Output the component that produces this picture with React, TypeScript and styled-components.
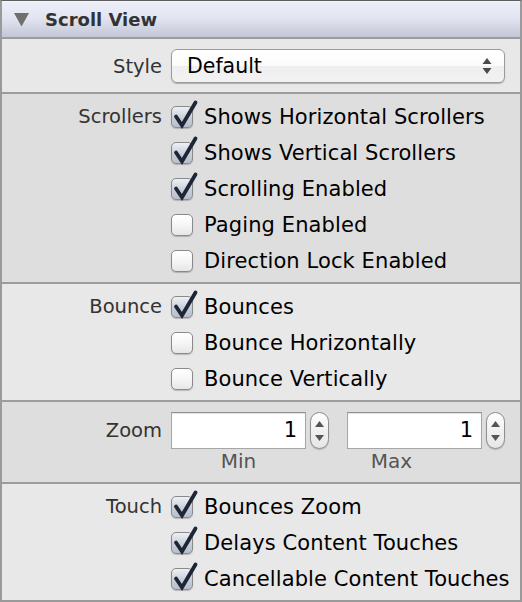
import React from "react";
import styled, { createGlobalStyle } from "styled-components";

const Global = createGlobalStyle`
  html, body { margin: 0; padding: 0; background: #e8e8e8; }
  body { font-family: "DejaVu Sans", "Liberation Sans", sans-serif; }
  * { box-sizing: border-box; }
`;

const Panel = styled.div`
  width: 522px;
  height: 602px;
  border: 2px solid #9a9a9a;
  border-top: 1px solid #5e5e5e;
  background: #e8e8e8;
  display: flex;
  flex-direction: column;
  overflow: hidden;
`;

const Header = styled.div`
  height: 38px;
  flex: none;
  display: flex;
  align-items: center;
  gap: 16px;
  padding-left: 12px;
  background: linear-gradient(#eceef8, #e3e5f1 45%, #c3c6d6);
  border-top: 1px solid #f4f5fb;
  border-bottom: 2px solid #9c9c9c;
`;

const Title = styled.span`
  font-weight: bold;
  font-size: 18px;
  color: #333;
`;

const Section = styled.div<{ $dark?: boolean; $h: number; $pt: number; $last?: boolean }>`
  height: ${(p) => p.$h}px;
  flex: none;
  padding-top: ${(p) => p.$pt}px;
  background: ${(p) => (p.$dark ? "#dedede" : "#e8e8e8")};
  border-bottom: ${(p) => (p.$last ? "none" : "2px solid #9c9c9c")};
`;

const Row = styled.div<{ $h?: number }>`
  display: grid;
  grid-template-columns: 160px 1fr;
  column-gap: 9px;
  align-items: center;
  height: ${(p) => p.$h ?? 36}px;
`;

const Label = styled.span`
  text-align: right;
  font-size: 19.5px;
  color: #333;
`;

const Select = styled.div`
  width: 334px;
  height: 34px;
  border: 1px solid #9a9a9a;
  border-radius: 6px;
  background: linear-gradient(#ffffff, #fbfbfb 50%, #efefef 50%, #f2f2f2);
  box-shadow: 0 1px 1px rgba(0, 0, 0, 0.25);
  display: flex;
  align-items: center;
  justify-content: space-between;
  padding: 0 12px 0 15px;
  font-size: 20.5px;
  color: #000;
`;

const CheckRow = styled.label`
  display: flex;
  align-items: center;
  gap: 11px;
  font-size: 21px;
  letter-spacing: 0.1px;
  color: #000;
  padding-top: 1px;
`;

const Box = styled.span<{ $on: boolean }>`
  position: relative;
  width: 22px;
  height: 22px;
  flex: none;
  border: 1px solid #8a8a8a;
  border-radius: 5px;
  background: ${(p) =>
    p.$on
      ? "linear-gradient(#eef0f4, #c9ced8 55%, #b8bfcc)"
      : "linear-gradient(#ffffff, #f6f6f6 50%, #e6e6e6)"};
  box-shadow: 0 1px 1px rgba(0, 0, 0, 0.2);
`;

const Tick = styled.svg`
  position: absolute;
  left: -1px;
  top: -7px;
  overflow: visible;
`;

const ZoomGroup = styled.div`
  display: flex;
  gap: 18px;
`;

const Caption = styled.div`
  width: 135px;
  display: flex;
  justify-content: center;
`;

const FieldTop = styled.div`
  display: flex;
  align-items: center;
  gap: 4px;
`;

const NumInput = styled.div`
  width: 135px;
  height: 37px;
  border: 1px solid #a6a6a6;
  border-top-color: #8e8e8e;
  background: #fff;
  box-shadow: inset 0 1px 1px rgba(0, 0, 0, 0.12);
  display: flex;
  align-items: center;
  justify-content: flex-end;
  padding-right: 8px;
  font-size: 21px;
  color: #000;
`;

const Stepper = styled.div`
  width: 19px;
  height: 37px;
  border: 1px solid #8e8e8e;
  border-radius: 10px;
  background: linear-gradient(#ffffff, #f1f1f1 50%, #e6e6e6);
  box-shadow: 0 1px 1px rgba(0, 0, 0, 0.2);
  display: flex;
  flex-direction: column;
  align-items: center;
  justify-content: space-between;
  padding: 8px 0 7px;
`;

const SubLabel = styled.span`
  font-size: 20px;
  color: #555;
`;

const Check = ({ on, text }: { on: boolean; text: string }) => (
  <CheckRow>
    <Box $on={on}>
      {on && (
        <Tick width="28" height="30" viewBox="0 0 28 30">
          <path
            d="M5 16.5 L11 25.5 L24.5 2.5"
            fill="none"
            stroke="#1d2636"
            strokeWidth="3.8"
            strokeLinecap="round"
            strokeLinejoin="miter"
          />
        </Tick>
      )}
    </Box>
    {text}
  </CheckRow>
);

const Arrows = () => (
  <svg width="10" height="20" viewBox="0 0 10 20">
    <path d="M5 2 L9.5 8 L0.5 8 Z" fill="#4a4a4a" />
    <path d="M5 18 L9.5 12 L0.5 12 Z" fill="#4a4a4a" />
  </svg>
);

const Up = () => (
  <svg width="9" height="6" viewBox="0 0 9 6">
    <path d="M4.5 0 L9 6 L0 6 Z" fill="#555" />
  </svg>
);
const Down = () => (
  <svg width="9" height="6" viewBox="0 0 9 6">
    <path d="M4.5 6 L9 0 L0 0 Z" fill="#555" />
  </svg>
);

const Placeholder = styled.span``;

export default function App() {
  return (
    <>
      <Global />
      <Panel>
        <Header>
          <svg width="15" height="15" viewBox="0 0 15 15">
            <path d="M0 1 L15 1 L7.5 14.5 Z" fill="#6f6f6f" />
          </svg>
          <Title>Scroll View</Title>
        </Header>
        <Section $h={55} $pt={9}>
          <Row $h={36}>
            <Label>Style</Label>
            <Select>
              <span>Default</span>
              <Arrows />
            </Select>
          </Row>
        </Section>
        <Section $dark $h={190} $pt={4}>
          <Row>
            <Label>Scrollers</Label>
            <Check on text="Shows Horizontal Scrollers" />
          </Row>
          <Row>
            <Placeholder />
            <Check on text="Shows Vertical Scrollers" />
          </Row>
          <Row>
            <Placeholder />
            <Check on text="Scrolling Enabled" />
          </Row>
          <Row>
            <Placeholder />
            <Check on={false} text="Paging Enabled" />
          </Row>
          <Row>
            <Placeholder />
            <Check on={false} text="Direction Lock Enabled" />
          </Row>
        </Section>
        <Section $h={118} $pt={4}>
          <Row>
            <Label>Bounce</Label>
            <Check on text="Bounces" />
          </Row>
          <Row>
            <Placeholder />
            <Check on={false} text="Bounce Horizontally" />
          </Row>
          <Row>
            <Placeholder />
            <Check on={false} text="Bounce Vertically" />
          </Row>
        </Section>
        <Section $dark $h={82} $pt={9}>
          <Row $h={38}>
            <Label>Zoom</Label>
            <ZoomGroup>
              <FieldTop>
                <NumInput>1</NumInput>
                <Stepper>
                  <Up />
                  <Down />
                </Stepper>
              </FieldTop>
              <FieldTop>
                <NumInput>1</NumInput>
                <Stepper>
                  <Up />
                  <Down />
                </Stepper>
              </FieldTop>
            </ZoomGroup>
          </Row>
          <Row $h={24}>
            <Placeholder />
            <ZoomGroup>
              <Caption>
                <SubLabel>Min</SubLabel>
              </Caption>
              <Caption>
                <SubLabel>Max</SubLabel>
              </Caption>
            </ZoomGroup>
          </Row>
        </Section>
        <Section $h={117} $pt={4} $last>
          <Row>
            <Label>Touch</Label>
            <Check on text="Bounces Zoom" />
          </Row>
          <Row>
            <Placeholder />
            <Check on text="Delays Content Touches" />
          </Row>
          <Row>
            <Placeholder />
            <Check on text="Cancellable Content Touches" />
          </Row>
        </Section>
      </Panel>
    </>
  );
}
